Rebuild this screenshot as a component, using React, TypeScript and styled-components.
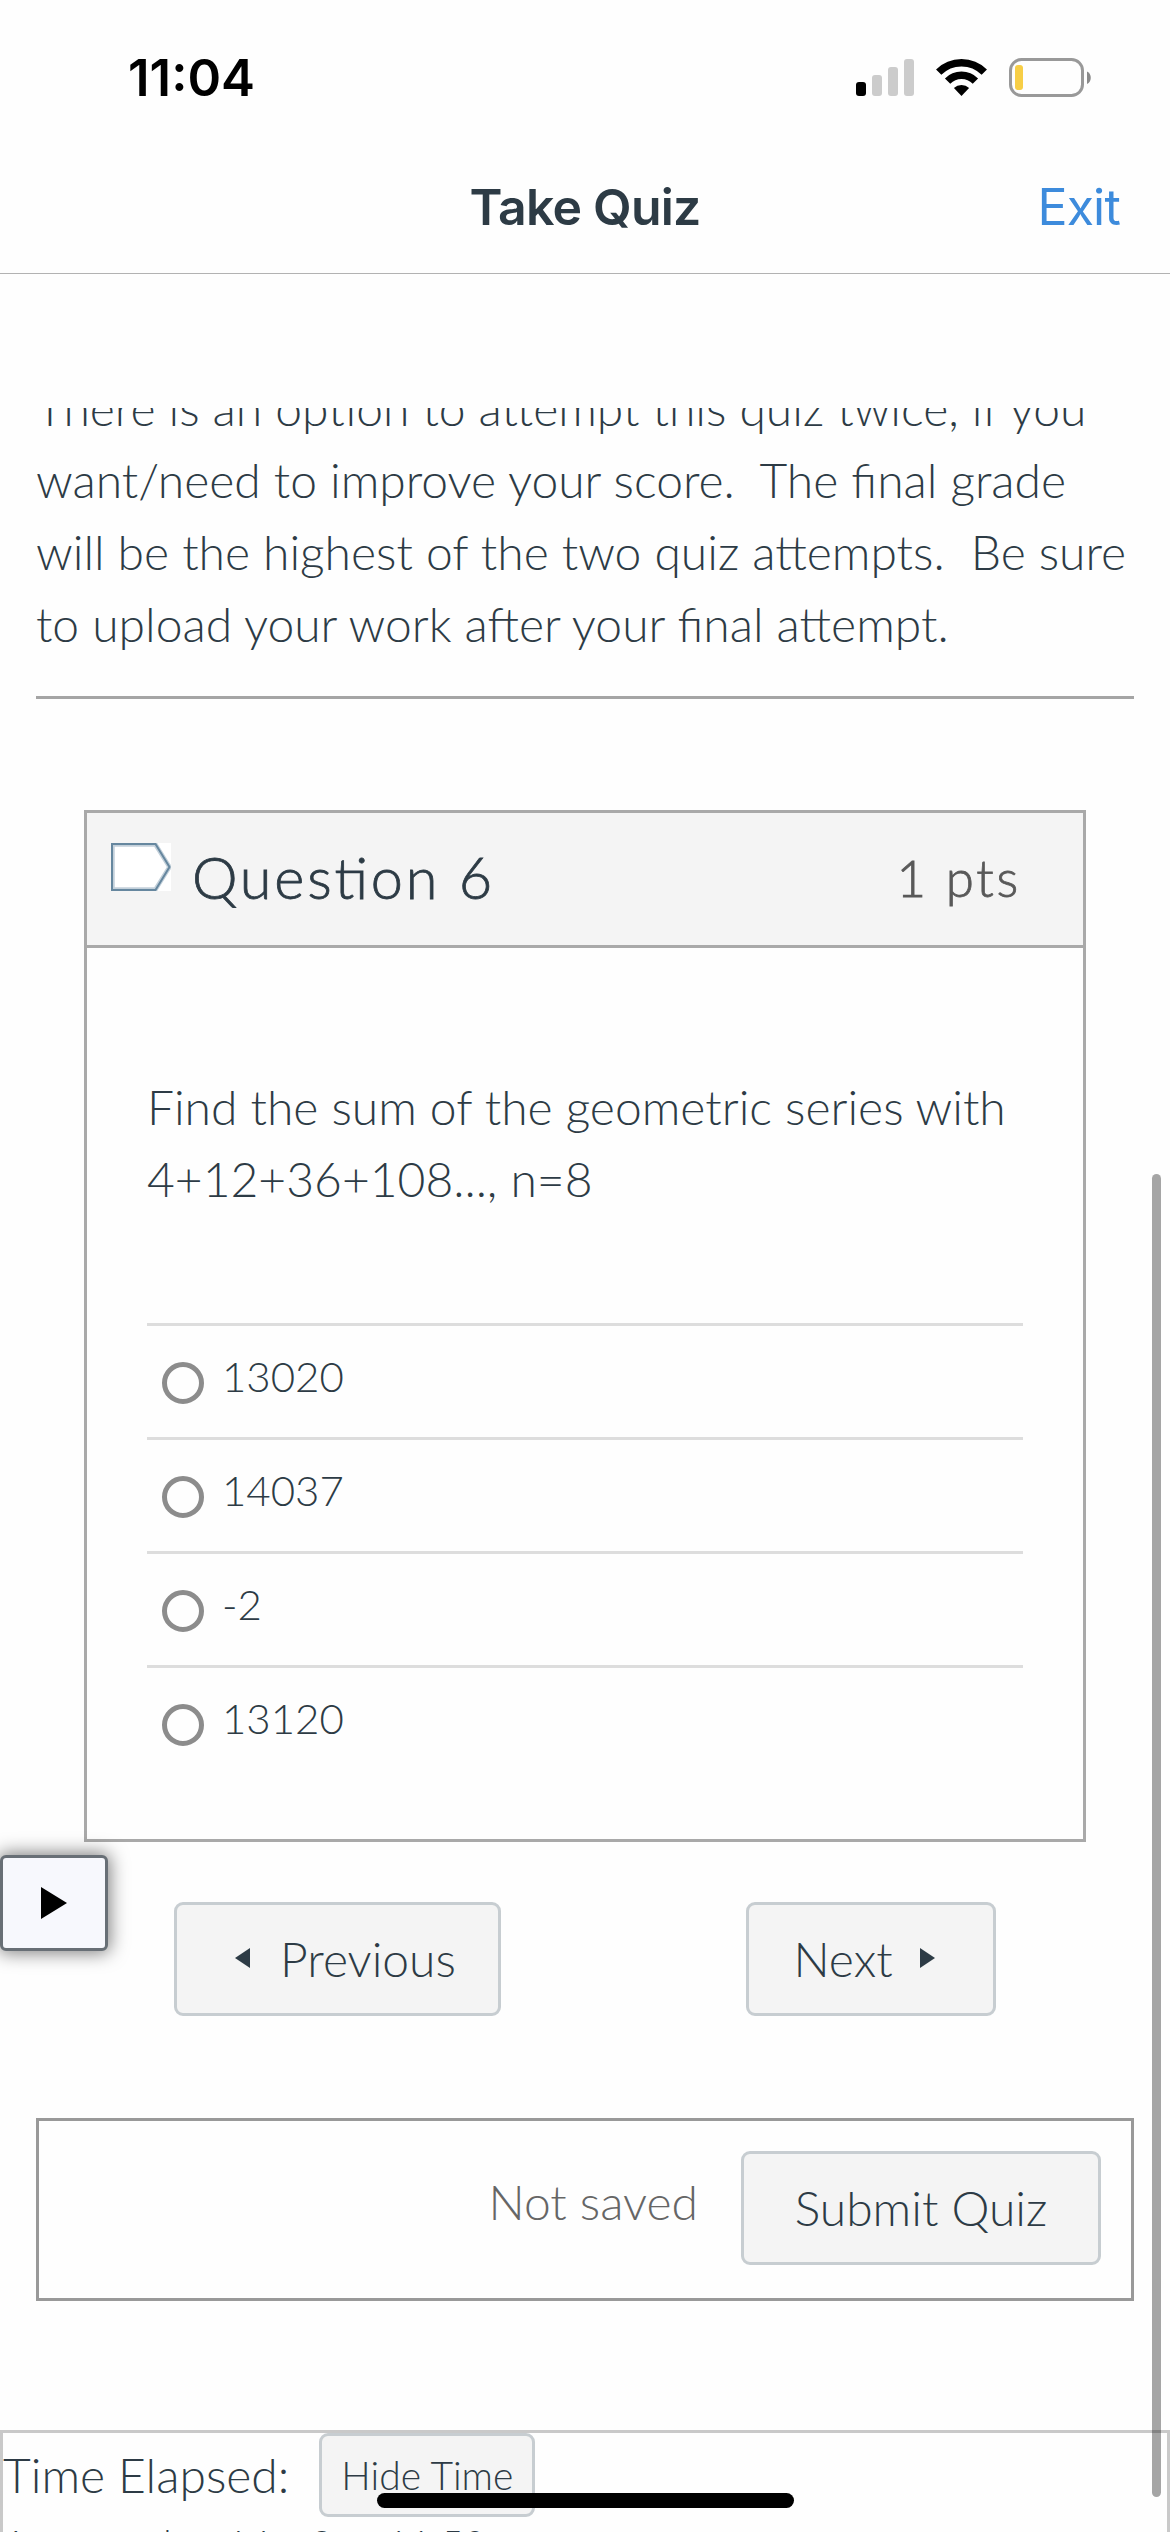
import React from "react";
import styled, { createGlobalStyle } from "styled-components";

const Global = createGlobalStyle`
  * { box-sizing: border-box; }
  html, body { margin: 0; background: #fefefe; }
  body { font-family: Lato, "Open Sans", sans-serif; font-weight: 300; color: #2d3b45; overflow: hidden; }
`;

const Screen = styled.div`
  position: relative;
  width: 1170px;
  height: 2532px;
  overflow: hidden;
  display: flex;
  flex-direction: column;
  background: #fefefe;
`;

const StatusBar = styled.header`
  height: 141px;
  flex: none;
  display: flex;
  justify-content: space-between;
  padding: 48px 79px 0 128px;
  color: #000;
`;

const Clock = styled.time`
  font: 600 51px/60px Inter, sans-serif;
`;

const StatusIcons = styled.svg`
  width: 237px;
  height: 42px;
  margin-top: 9px;
`;

const NavBar = styled.nav`
  height: 133px;
  flex: none;
  display: grid;
  grid-template-columns: 1fr auto 1fr;
  align-items: center;
  padding: 0 50px;
  border-bottom: 1px solid #b2b2b2;
  font-family: Inter, sans-serif;
  letter-spacing: -0.8px;
`;

const NavTitle = styled.h1`
  grid-column: 2;
  margin: 0;
  font-size: 50px;
  line-height: 60px;
  font-weight: 600;
`;

const ExitLink = styled.a`
  justify-self: end;
  color: #3d8bdc;
  font-size: 50px;
  line-height: 60px;
  font-weight: 400;
`;

const Viewport = styled.main`
  margin-top: 134px;
  height: 2124px;
  flex: none;
  overflow: hidden;
`;

const Instructions = styled.section`
  margin: -36px 36px 0;
  padding-bottom: 36px;
  border-bottom: 3px solid #a5a5a5;
`;

const Line = styled.div`
  font-size: 48px;
  line-height: 72px;
  white-space: pre;
`;

const Card = styled.section`
  width: 1002px;
  height: 1032px;
  margin: 111px 0 0 84px;
  border: 3px solid #a9a9a9;
`;

const CardHeader = styled.div`
  height: 135px;
  display: flex;
  align-items: flex-start;
  padding: 30px 62px 0 24px;
  background: #f4f4f4;
  border-bottom: 3px solid #a9a9a9;
  letter-spacing: 2.8px;
  -webkit-text-stroke: 0.8px currentColor;
`;

const Flag = styled.svg`
  width: 60px;
  height: 48px;
  flex: none;
`;

const QuestionTitle = styled.h2`
  margin: -2px 0 0 21px;
  font-size: 57.6px;
  line-height: 72px;
  font-weight: 300;
  font-feature-settings: "liga" 1;
`;

const Points = styled.span`
  margin: -1px 0 0 auto;
  font-size: 51px;
  line-height: 72px;
  color: #595959;
`;

const CardBody = styled.div`
  padding: 123px 60px 0;
`;

const Answers = styled.div`
  margin-top: 108px;
`;

const Answer = styled.label`
  height: 114px;
  display: flex;
  align-items: flex-start;
  padding: 20px 0 0 15px;
  gap: 18px;
  border-top: 3px solid #dddddd;
  font-size: 42px;
  line-height: 60px;
`;

const Radio = styled.span`
  width: 42px;
  height: 42px;
  margin-top: 16px;
  border: 5px solid #8c8c8c;
  border-radius: 50%;
`;

const Pager = styled.div`
  display: flex;
  justify-content: space-between;
  margin: 60px 174px 0 174px;
`;

const Button = styled.button<{ $w: number; $gap?: number; $pad?: string }>`
  width: ${(p) => p.$w}px;
  height: 114px;
  display: flex;
  align-items: center;
  justify-content: center;
  gap: ${(p) => p.$gap ?? 0}px;
  padding: ${(p) => p.$pad ?? "0"};
  border: 3px solid #c7cdd1;
  border-radius: 9px;
  background: #f4f4f4;
  color: #2d3b45;
  font: 300 48px/72px Lato, sans-serif;
`;

const SmallButton = styled(Button)`
  height: 84px;
  font-size: 39px;
`;

const Arrow = styled.svg`
  width: 15px;
  height: 20px;
  margin-top: -2px;
`;

const SubmitPanel = styled.section`
  height: 183px;
  margin: 102px 36px 0;
  display: flex;
  justify-content: flex-end;
  padding: 30px;
  gap: 43px;
  border: 3px solid #999999;
`;

const SaveState = styled.span`
  margin-top: 15px;
  font-size: 48px;
  line-height: 72px;
  color: #666666;
`;

const TimerPanel = styled.section`
  height: 120px;
  margin-top: 129px;
  border: 3px solid #c9c9c9;
`;

const TimerRow = styled.div`
  height: 84px;
  display: flex;
  gap: 30px;
`;

const TimerLabel = styled.span`
  padding-top: 6px;
  font-size: 48px;
  line-height: 72px;
`;

const TimerValue = styled.div`
  font-size: 39px;
  line-height: 54px;
  white-space: pre;
`;

const DockTab = styled.button`
  position: absolute;
  left: 0;
  top: 1855px;
  width: 108px;
  height: 96px;
  display: flex;
  padding: 29px 0 0 38px;
  border: 3px solid #686f76;
  border-radius: 6px;
  background: #f7f8fd;
  box-shadow: 0 0 18px 2px rgba(0, 0, 0, 0.5);
`;

const ScrollThumb = styled.div`
  position: absolute;
  left: 1152px;
  top: 1174px;
  width: 9px;
  height: 1323px;
  border-radius: 5px;
  background: rgba(0, 0, 0, 0.35);
`;

const HomeIndicator = styled.div`
  position: absolute;
  left: 377px;
  top: 2493px;
  width: 417px;
  height: 15px;
  border-radius: 8px;
  background: #000;
`;

const answers = ["13020", "14037", "-2", "13120"];

export default function App() {
  return (
    <Screen>
      <Global />
      <StatusBar>
        <Clock>11:04</Clock>
        <StatusIcons viewBox="854 57 237 42">
          <rect x="856" y="82" width="10" height="14" rx="3" fill="#000" />
          <rect x="872" y="75" width="10" height="21" rx="3" fill="#ccc" />
          <rect x="888" y="67" width="10" height="29" rx="3" fill="#ccc" />
          <rect x="904" y="59" width="10" height="37" rx="3" fill="#ccc" />
          <g fill="none" stroke="#000" strokeWidth="7.5">
            <path d="M938.7 72.2a32.2 32.2 0 0 1 45.6 0" />
            <path d="M947.6 81.1a19.6 19.6 0 0 1 27.8 0" />
          </g>
          <path d="M961.5 96l-7.6-8a11 11 0 0 1 15.2 0z" fill="#000" />
          <rect x="1010.5" y="59.5" width="72" height="36" rx="11" fill="none" stroke="#999" strokeWidth="3" />
          <rect x="1015" y="65" width="8" height="25" rx="3" fill="#f7ce46" />
          <path d="M1087 71.5c5 2 5 10.500 0 12.500z" fill="#8a8a8a" />
        </StatusIcons>
      </StatusBar>
      <NavBar>
        <NavTitle>Take Quiz</NavTitle>
        <ExitLink>Exit</ExitLink>
      </NavBar>
      <Viewport>
        <Instructions>
          <Line>There is an option to attempt this quiz twice, if you</Line>
          <Line>{"want/need to improve your score.  The final grade"}</Line>
          <Line>{"will be the highest of the two quiz attempts.  Be sure"}</Line>
          <Line>to upload your work after your final attempt.</Line>
        </Instructions>
        <Card>
          <CardHeader>
            <Flag viewBox="0 0 60 48">
              <rect x="0" y="0" width="60" height="48" fill="#fff" />
              <path d="M1.5 1.5H44.5L58.5 24L44.500 46.5H1.5z" fill="#fff" stroke="#c3d0da" strokeWidth="4.5" />
              <path d="M1 1H44.5L58.5 24L44.5 47H1z" fill="none" stroke="#66879f" strokeWidth="2" />
            </Flag>
            <QuestionTitle>Question 6</QuestionTitle>
            <Points>1 pts</Points>
          </CardHeader>
          <CardBody>
            <Line>Find the sum of the geometric series with</Line>
            <Line>4+12+36+108..., n=8</Line>
            <Answers>
              {answers.map((a) => (
                <Answer key={a}>
                  <Radio />
                  <span>{a}</span>
                </Answer>
              ))}
            </Answers>
          </CardBody>
        </Card>
        <Pager>
          <Button $w={327} $gap={30} $pad="0 0 0 16px">
            <Arrow viewBox="0 0 15 20"><path d="M0 10L15 0V20z" fill="#2d3b45" /></Arrow>
            Previous
          </Button>
          <Button $w={250} $gap={27} $pad="0 14px 0 0">
            Next
            <Arrow viewBox="0 0 15 20"><path d="M15 10L0 0V20z" fill="#2d3b45" /></Arrow>
          </Button>
        </Pager>
        <SubmitPanel>
          <SaveState>Not saved</SaveState>
          <Button $w={360}>Submit Quiz</Button>
        </SubmitPanel>
        <TimerPanel>
          <TimerRow>
            <TimerLabel>Time Elapsed:</TimerLabel>
            <SmallButton $w={216}>Hide Time</SmallButton>
          </TimerRow>
          <TimerValue>Attempt due: Mar 8 at 11:59pm</TimerValue>
        </TimerPanel>
      </Viewport>
      <DockTab aria-label="Open">
        <svg width="26" height="32" viewBox="0 0 26 32"><path d="M0 0L26 16L0 32z" fill="#000" /></svg>
      </DockTab>
      <ScrollThumb />
      <HomeIndicator />
    </Screen>
  );
}
